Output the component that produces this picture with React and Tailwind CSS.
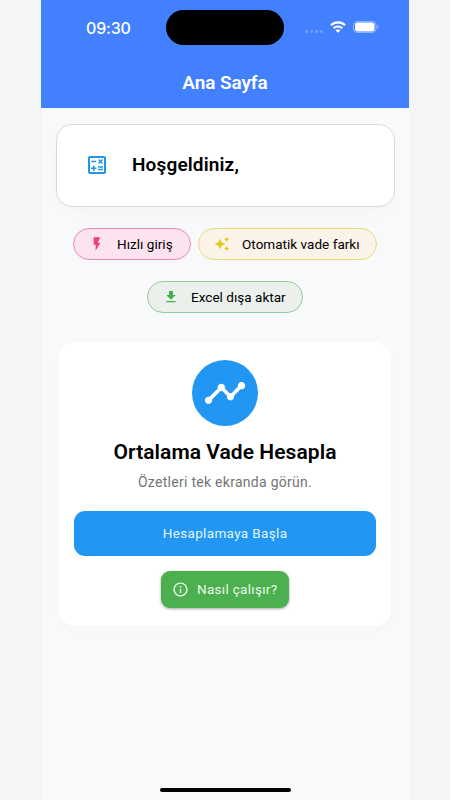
import {
  MdOutlineCalculate,
  MdFlashOn,
  MdAutoAwesome,
  MdFileDownload,
  MdTimeline,
  MdInfoOutline,
} from "react-icons/md";

function StatusBar() {
  return (
    <div className="flex h-[56px] text-white">
      <div className="w-[125px] pt-[18px] pl-[45px] font-['Inter'] text-[16px] leading-[20px] font-medium tracking-[-0.2px]">
        09:30
      </div>
      <div className="mt-[10px] h-[35px] w-[118px] rounded-full bg-black" />
      <div className="flex h-[54px] flex-1 items-center pl-[21px]">
        <div className="flex gap-[2px] pt-[9px]">
          <span className="size-[3px] rounded-full bg-white/25" />
          <span className="size-[3px] rounded-full bg-white/25" />
          <span className="size-[3px] rounded-full bg-white/25" />
          <span className="size-[3px] rounded-full bg-white/25" />
        </div>
        <svg className="ml-[7px] h-[12px] w-[16px]" viewBox="0 0 16 12" fill="none" stroke="currentColor">
          <path d="M1 4.300a10 10 0 0 1 14 0" strokeWidth="2.200" />
          <path d="M3.700 7.200a6.200 6.200 0 0 1 8.600 0" strokeWidth="2.100" />
          <path d="M8 11.800L5.600 9.400a3.400 3.400 0 0 1 4.800 0z" fill="currentColor" stroke="none" />
        </svg>
        <svg className="ml-[7px] h-[12px] w-[26px]" viewBox="0 0 26 12" fill="none">
          <rect x="0.500" y="0.500" width="22.500" height="11" rx="3.500" stroke="white" strokeOpacity="0.4" />
          <rect x="2" y="1.500" width="19.500" height="9" rx="2.500" fill="white" />
          <path d="M24.300 4v4c.7-.3 1.200-1.100 1.200-2s-.5-1.700-1.200-2z" fill="white" fillOpacity="0.500" />
        </svg>
      </div>
    </div>
  );
}

function Chip({ icon: Icon, label, className, iconClass }) {
  return (
    <div className={`flex h-[32px] items-center rounded-full border pl-[15px] ${className}`}>
      <Icon className={`size-[16px] shrink-0 ${iconClass}`} />
      <span className="ml-[12px] text-[13.5px] leading-[20px] tracking-[0.03px] whitespace-nowrap text-black">
        {label}
      </span>
    </div>
  );
}

export default function App() {
  return (
    <div className="flex h-[800px] justify-center bg-[#f4f5f7] font-['Roboto',sans-serif]">
      <div className="flex h-full w-[368px] flex-col bg-[#f8f9fb]">
        {/* App bar */}
        <header className="h-[108px] bg-[#4280ff]">
          <StatusBar />
          <h1 className="pt-[14px] text-center text-[19px] leading-[25px] font-semibold tracking-[-0.1px] text-white">
            Ana Sayfa
          </h1>
        </header>

        <main className="flex flex-1 flex-col px-[15px] pt-[16px]">
          {/* Welcome */}
          <section className="flex h-[83px] w-[339px] shrink-0 items-center rounded-[16px] border border-[#d9dadc] bg-white pb-px pl-[28px] shadow-[0_5px_12px_rgba(0,0,0,0.02)]">
            <MdOutlineCalculate className="size-[24px] text-[#2196e3]" />
            <span className="ml-[23px] text-[19px] font-semibold tracking-[0.15px] text-black">
              Hoşgeldiniz,
            </span>
          </section>

          {/* Features */}
          <div className="mt-[21px] flex flex-wrap justify-center gap-x-[7px] gap-y-[21px]">
            <Chip
              icon={MdFlashOn}
              label="Hızlı giriş"
              className="w-[118px] border-[#ec8bb3] bg-[#fde3ef]"
              iconClass="text-[#ec407a]"
            />
            <Chip
              icon={MdAutoAwesome}
              label="Otomatik vade farkı"
              className="w-[179px] border-[#ecdc80] bg-[#fbf2e8]"
              iconClass="text-[#dfcb1c]"
            />
            <Chip
              icon={MdFileDownload}
              label="Excel dışa aktar"
              className="w-[156px] border-[#97cc9c] bg-[#ebf0ed]"
              iconClass="text-[#43ae4b]"
            />
          </div>

          {/* Calculator */}
          <section className="mx-[3px] mt-[29px] flex h-[284px] flex-col items-center rounded-[16px] bg-white px-[15px] pt-[18px] shadow-[0_3px_10px_rgba(0,0,0,0.02)]">
            <div className="flex size-[66px] shrink-0 items-center justify-center rounded-full bg-[#2196f3]">
              <MdTimeline className="size-[44px] text-white" />
            </div>
            <h2 className="mt-[12px] text-[21px] leading-[28px] font-semibold tracking-[0.05px] text-black">
              Ortalama Vade Hesapla
            </h2>
            <p className="mt-[6px] text-[14px] leading-[20px] tracking-[0.28px] text-[#757575]">
              Özetleri tek ekranda görün.
            </p>
            <button className="mt-[19px] h-[45px] w-full shrink-0 rounded-[11px] bg-[#2196f3] text-[13.5px] tracking-[0.35px] text-[#e3f5ff]">
              Hesaplamaya Başla
            </button>
            <button className="mt-[15px] flex h-[37px] w-[128px] shrink-0 items-center rounded-[9px] bg-[#4caf50] pl-[11px] text-[13.5px] tracking-[0.3px] whitespace-nowrap text-[#e9fbe9] shadow-[0_1px_3px_rgba(0,0,0,0.35)]">
              <MdInfoOutline className="mr-[8px] size-[17px] shrink-0" />
              Nasıl çalışır?
            </button>
          </section>
        </main>

        {/* Home indicator */}
        <div className="mb-[8px] h-[4px] w-[131px] self-center rounded-full bg-black" />
      </div>
    </div>
  );
}
